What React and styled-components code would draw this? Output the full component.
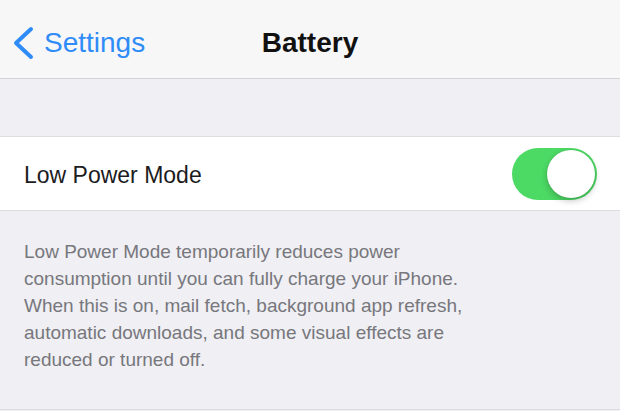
import React from 'react';
import styled, { createGlobalStyle } from 'styled-components';

const GlobalStyle = createGlobalStyle`
  html, body {
    margin: 0;
    padding: 0;
    background: #efeff4;
    font-family: "Liberation Sans", Arial, Helvetica, sans-serif;
    -webkit-font-smoothing: antialiased;
  }
`;

const NavBar = styled.header`
  height: 70px;
  padding-top: 8px;
  display: grid;
  grid-template-columns: 1fr auto 1fr;
  align-items: center;
  background: #f7f7f8;
  border-bottom: 1px solid #d4d4d8;
`;

const BackButton = styled.a`
  display: flex;
  align-items: center;
  gap: 10px;
  padding-left: 12px;
  color: #2f8cf7;
  font-size: 28px;
  text-decoration: none;
  cursor: pointer;
`;

const Title = styled.h1`
  margin: 0;
  font-size: 28px;
  font-weight: 700;
  color: #111;
`;

const Spacer = styled.div`
  height: 57px;
`;

const Cell = styled.div`
  height: 73px;
  display: flex;
  align-items: center;
  justify-content: space-between;
  padding: 0 23px 0 24px;
  background: #fff;
  border-top: 1px solid #dedee2;
  border-bottom: 1px solid #dedee2;
`;

const CellLabel = styled.span`
  padding-top: 3px;
  font-size: 23px;
  color: #1c1c1e;
`;

const Toggle = styled.button`
  width: 85px;
  height: 52px;
  padding: 2px;
  border: none;
  border-radius: 26px;
  display: flex;
  justify-content: ${p => (p.$on ? 'flex-end' : 'flex-start')};
  background: ${p => (p.$on ? '#4cd964' : '#e5e5ea')};
  cursor: pointer;
`;

const Knob = styled.span`
  width: 48px;
  height: 48px;
  border-radius: 50%;
  background: #fff;
  box-shadow: 0 3px 6px rgba(0, 0, 0, 0.22), 0 0 0 0.5px rgba(0, 0, 0, 0.08);
`;

const Footer = styled.p`
  margin: 0;
  padding: 27px 24px 36px;
  font-size: 19px;
  line-height: 27px;
  color: #77777c;
  border-bottom: 1px solid #dcdce0;
`;

export default function App() {
  return (
    <>
      <GlobalStyle />
      <NavBar>
        <BackButton>
          <svg width="22" height="34" viewBox="0 0 22 34" fill="none">
            <polyline
              points="19,3 4,17 19,31"
              stroke="#2f8cf7"
              strokeWidth="4"
              strokeLinecap="round"
              strokeLinejoin="round"
            />
          </svg>
          Settings
        </BackButton>
        <Title>Battery</Title>
        <div />
      </NavBar>
      <Spacer />
      <Cell>
        <CellLabel>Low Power Mode</CellLabel>
        <Toggle $on aria-label="Low Power Mode">
          <Knob />
        </Toggle>
      </Cell>
      <Footer>
        Low Power Mode temporarily reduces power
        <br />
        consumption until you can fully charge your iPhone.
        <br />
        When this is on, mail fetch, background app refresh,
        <br />
        automatic downloads, and some visual effects are
        <br />
        reduced or turned off.
      </Footer>
    </>
  );
}
